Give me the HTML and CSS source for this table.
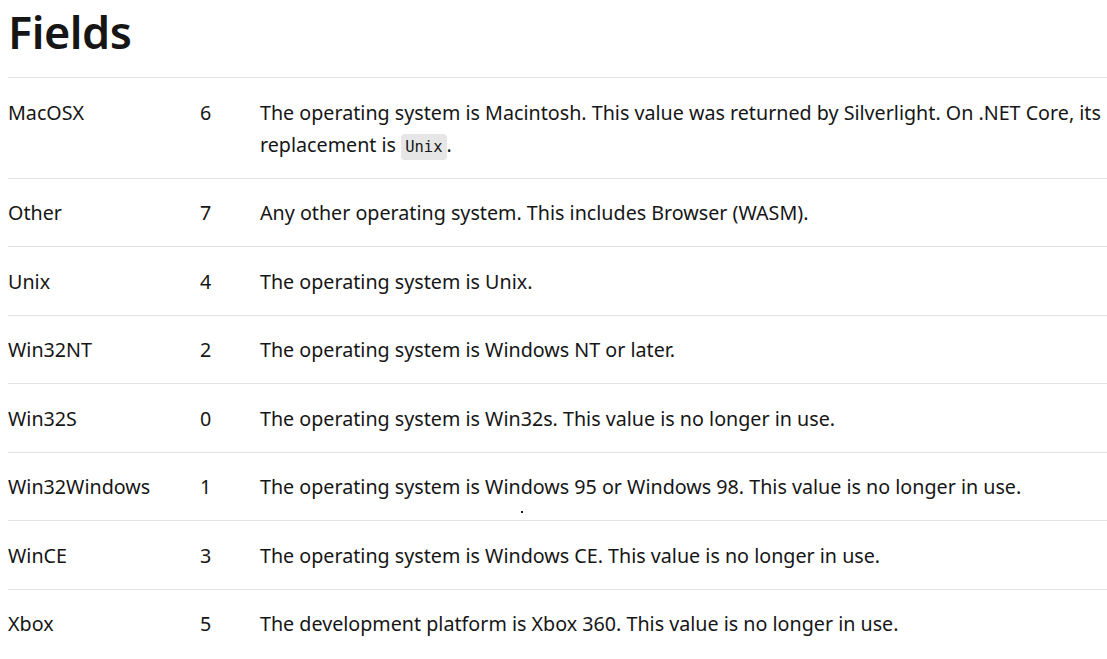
FILE: index.html
```html
<!DOCTYPE html>
<html lang="en">
<head>
<meta charset="utf-8">
<title>Fields</title>
<link rel="stylesheet" href="styles.css">
</head>
<body>
<main class="page">
  <h2 class="heading">Fields</h2>
  <div class="fields">
    <div class="row">
      <div class="name">MacOSX</div>
      <div class="value">6</div>
      <div class="desc">The operating system is Macintosh. This value was returned by Silverlight. On .NET Core, its replacement is <code class="code">Unix</code>.</div>
    </div>
    <div class="row">
      <div class="name">Other</div>
      <div class="value">7</div>
      <div class="desc">Any other operating system. This includes Browser (WASM).</div>
    </div>
    <div class="row">
      <div class="name">Unix</div>
      <div class="value">4</div>
      <div class="desc">The operating system is Unix.</div>
    </div>
    <div class="row">
      <div class="name">Win32NT</div>
      <div class="value">2</div>
      <div class="desc">The operating system is Windows NT or later.</div>
    </div>
    <div class="row">
      <div class="name">Win32S</div>
      <div class="value">0</div>
      <div class="desc">The operating system is Win32s. This value is no longer in use.</div>
    </div>
    <div class="row">
      <div class="name">Win32Windows</div>
      <div class="value">1</div>
      <div class="desc">The operating system is Windows 95 or Windows 98. This value is no longer in use.</div>
    </div>
    <div class="row">
      <div class="name">WinCE</div>
      <div class="value">3</div>
      <div class="desc">The operating system is Windows CE. This value is no longer in use.</div>
    </div>
    <div class="row">
      <div class="name">Xbox</div>
      <div class="value">5</div>
      <div class="desc">The development platform is Xbox 360. This value is no longer in use.</div>
    </div>
  </div>
  <span class="cursor-dot"></span>
</main>
</body>
</html>
```

FILE: styles.css
```css
html, body {
  margin: 0;
  padding: 0;
  background: #ffffff;
}

body {
  font-family: "Noto Sans", "Open Sans", sans-serif;
  color: #161616;
  overflow: hidden;
}

.page {
  position: relative;
  padding: 0 0 0 8px;
}

.heading {
  margin: 0;
  padding-top: 2px;
  font-size: 45px;
  line-height: 60px;
  font-weight: 600;
  height: 77px;
  box-sizing: border-box;
  letter-spacing: -0.5px;
}

.fields {
  display: flex;
  flex-direction: column;
}

.row {
  display: grid;
  grid-template-columns: 192px 60px 1fr;
  border-top: 1px solid #e3e3e3;
  padding: 18.5px 0 17px;
  font-size: 19.7px;
  line-height: 32px;
}

.code {
  font-family: "DejaVu Sans Mono", "Liberation Mono", monospace;
  font-size: 15.5px;
  line-height: 1;
  background: #e6e6e6;
  border-radius: 4px;
  padding: 4px 4px;
  color: #161616;
}

.cursor-dot {
  position: absolute;
  left: 521px;
  top: 511px;
  width: 2px;
  height: 2px;
  background: #161616;
}
```
